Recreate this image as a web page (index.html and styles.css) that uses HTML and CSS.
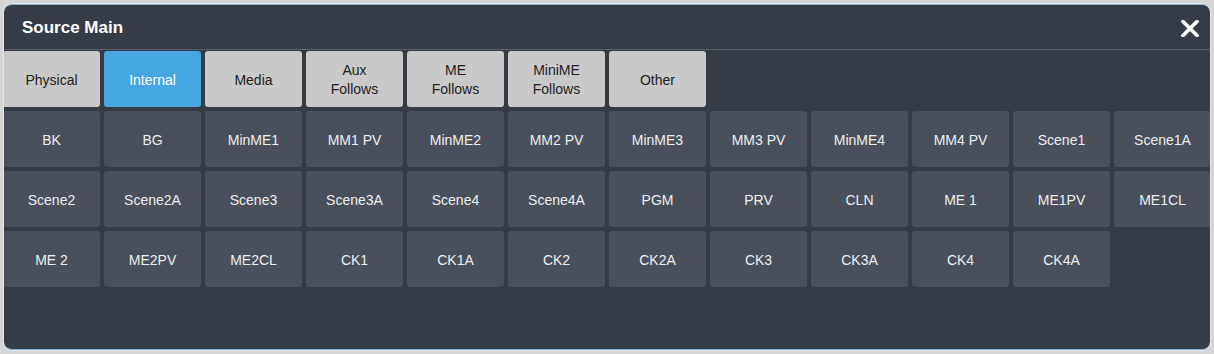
FILE: index.html
```html
<!DOCTYPE html>
<html lang="en">
<head>
    <meta charset="UTF-8">
    <title>Source Main</title>
    <link rel="stylesheet" href="styles.css">
</head>
<body>
    <div class="window">
        <div class="header">
            <h1>Source Main</h1>
            <button class="close-btn" aria-label="Close">
                <svg width="18" height="17" viewBox="0 0 18 17">
                    <path d="M2 1.5 L16 15.5 M16 1.5 L2 15.5" stroke="#ffffff" stroke-width="3.6" stroke-linecap="square"/>
                </svg>
            </button>
        </div>

        <div class="content">
            <div class="tabs">
                <button class="tab">Physical</button>
                <button class="tab active">Internal</button>
                <button class="tab">Media</button>
                <button class="tab">Aux<br>Follows</button>
                <button class="tab">ME<br>Follows</button>
                <button class="tab">MiniME<br>Follows</button>
                <button class="tab">Other</button>
            </div>

            <div class="source-grid">
                <button class="src">BK</button>
                <button class="src">BG</button>
                <button class="src">MinME1</button>
                <button class="src">MM1 PV</button>
                <button class="src">MinME2</button>
                <button class="src">MM2 PV</button>
                <button class="src">MinME3</button>
                <button class="src">MM3 PV</button>
                <button class="src">MinME4</button>
                <button class="src">MM4 PV</button>
                <button class="src">Scene1</button>
                <button class="src">Scene1A</button>

                <button class="src">Scene2</button>
                <button class="src">Scene2A</button>
                <button class="src">Scene3</button>
                <button class="src">Scene3A</button>
                <button class="src">Scene4</button>
                <button class="src">Scene4A</button>
                <button class="src">PGM</button>
                <button class="src">PRV</button>
                <button class="src">CLN</button>
                <button class="src">ME 1</button>
                <button class="src">ME1PV</button>
                <button class="src">ME1CL</button>

                <button class="src">ME 2</button>
                <button class="src">ME2PV</button>
                <button class="src">ME2CL</button>
                <button class="src">CK1</button>
                <button class="src">CK1A</button>
                <button class="src">CK2</button>
                <button class="src">CK2A</button>
                <button class="src">CK3</button>
                <button class="src">CK3A</button>
                <button class="src">CK4</button>
                <button class="src">CK4A</button>
            </div>
        </div>
    </div>
</body>
</html>
```

FILE: styles.css
```css
:root {
    --window-bg: #363c45;
    --tab-bg: #c9c9c9;
    --tab-text: #222222;
    --active-bg: #46a6e1;
    --src-bg: #4a505b;
    --src-text: #eceef0;
    --frame-color: #d5d5d5;
    --font-family: 'Liberation Sans', Arial, sans-serif;
}

* {
    margin: 0;
    padding: 0;
    box-sizing: border-box;
}

html, body {
    height: 354px;
}

body {
    font-family: var(--font-family);
    background: var(--frame-color);
    padding: 4px;
    overflow: hidden;
}

.window {
    width: 1206px;
    height: 346px;
    background: var(--window-bg);
    border-top: 1px solid #86b6d6;
    border-bottom: 1px solid #86b6d6;
    border-radius: 8px;
    box-shadow: 0 0 0 1px #e6e6e6;
    overflow: hidden;
}

.header {
    height: 45px;
    border-bottom: 1px solid #5c6169;
    display: flex;
    justify-content: space-between;
    align-items: center;
    padding: 2px 10px 0 18px;
}

.header h1 {
    font-size: 17px;
    font-weight: bold;
    color: #ffffff;
}

.close-btn {
    background: none;
    border: none;
    width: 20px;
    height: 20px;
    display: flex;
    align-items: center;
    justify-content: center;
    cursor: pointer;
}

.content {
    margin-left: -1px;
    padding-top: 1px;
    display: flex;
    flex-direction: column;
    gap: 4px;
}

.tabs {
    display: flex;
    gap: 4px;
}

.tab, .src {
    width: 97px;
    height: 56px;
    padding-top: 2px;
    border: none;
    border-radius: 3px;
    font-family: var(--font-family);
    font-size: 14px;
    line-height: 19px;
    text-align: center;
    cursor: pointer;
}

.tab {
    background: var(--tab-bg);
    color: var(--tab-text);
}

.tab.active {
    background: var(--active-bg);
    color: #ffffff;
}

.source-grid {
    display: grid;
    grid-template-columns: repeat(12, 97px);
    grid-auto-rows: 56px;
    gap: 4px;
}

.src {
    background: var(--src-bg);
    color: var(--src-text);
}
```
